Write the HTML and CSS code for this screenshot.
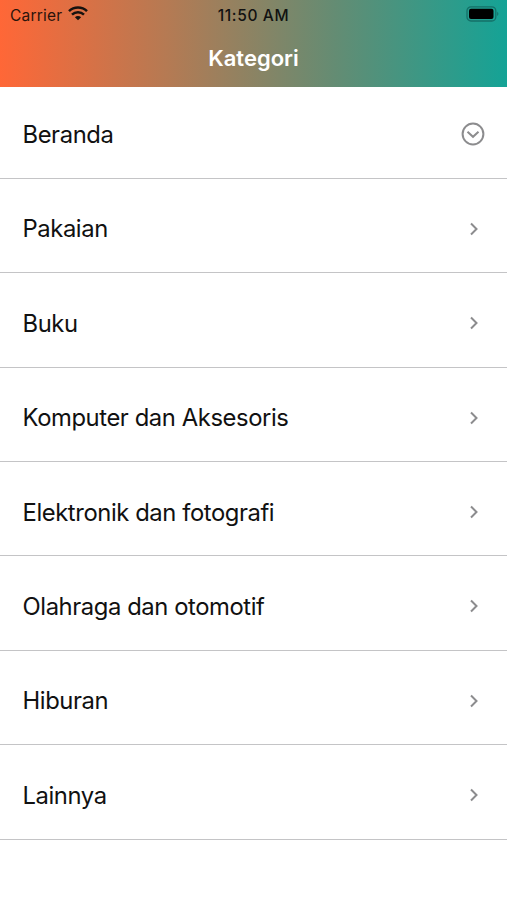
FILE: index.html
```html
<!DOCTYPE html>
<html lang="id">
<head>
<meta charset="utf-8">
<title>Kategori</title>
<link rel="stylesheet" href="styles.css">
</head>
<body>
<header class="header">
  <div class="status">
    <div class="carrier"><span class="carrier-name">Carrier</span>
      <svg class="wifi" width="20" height="15" viewBox="0 0 20 15"><path d="M10 14.300 6.900 11.300a4.400 4.400 0 0 1 6.200 0z"/><path d="M1 5.200a13 13 0 0 1 18 0M4 8.600a8.600 8.600 0 0 1 12 0" fill="none" stroke="#16120f" stroke-width="2.500"/></svg>
    </div>
    <div class="clock"><span class="clock-text">11:50 AM</span></div>
    <div class="battery"><svg width="34" height="16" viewBox="0 0 34 16"><rect x="1" y=".8" width="28.800" height="14.200" rx="4" fill="none" stroke="#147068" stroke-width="1.300"/><rect x="3" y="2.800" width="24.500" height="10.200" rx="2"/><path d="M31.200 5.700q2.400 2.200 0 4.400z" fill="#147068"/></svg></div>
  </div>
  <h1 class="title"><span class="title-text">Kategori</span></h1>
</header>
<main class="list">
  <div class="row first"><span class="label">Beranda</span><svg class="down" width="24" height="24" viewBox="0 0 24 24"><circle cx="12" cy="12" r="10.400"/><path d="m6.500 9.800 5.500 5 5.500-5"/></svg></div>
  <div class="row"><span class="label">Pakaian</span><svg class="chev" width="10" height="14" viewBox="0 0 10 14"><path d="m2 1.500 5.500 5.500L2 12.500"/></svg></div>
  <div class="row"><span class="label">Buku</span><svg class="chev" width="10" height="14" viewBox="0 0 10 14"><path d="m2 1.500 5.500 5.500L2 12.500"/></svg></div>
  <div class="row"><span class="label">Komputer dan Aksesoris</span><svg class="chev" width="10" height="14" viewBox="0 0 10 14"><path d="m2 1.500 5.500 5.500L2 12.500"/></svg></div>
  <div class="row"><span class="label">Elektronik dan fotografi</span><svg class="chev" width="10" height="14" viewBox="0 0 10 14"><path d="m2 1.500 5.500 5.500L2 12.500"/></svg></div>
  <div class="row"><span class="label">Olahraga dan otomotif</span><svg class="chev" width="10" height="14" viewBox="0 0 10 14"><path d="m2 1.500 5.500 5.500L2 12.500"/></svg></div>
  <div class="row"><span class="label">Hiburan</span><svg class="chev" width="10" height="14" viewBox="0 0 10 14"><path d="m2 1.500 5.500 5.500L2 12.500"/></svg></div>
  <div class="row"><span class="label">Lainnya</span><svg class="chev" width="10" height="14" viewBox="0 0 10 14"><path d="m2 1.500 5.500 5.500L2 12.500"/></svg></div>
</main>
</body>
</html>
```
FILE: styles.css
```css
* { box-sizing: border-box; }
body { margin: 0; height: 900px; overflow: hidden; background: #fff; color: #111; font-family: Inter, sans-serif; }
svg { display: block; flex: none; }
.header { height: 87.4px; background: linear-gradient(90deg, #ff6737, #b57a53 33%, #648c73 66%, #14a396); }
.status { height: 30px; display: grid; grid-template-columns: 1fr auto 1fr; align-items: center; padding: 0 7px 0 10px; font-size: 15.5px; }
.carrier { display: flex; align-items: center; gap: 6px; color: #2b130b; }
.carrier-name { letter-spacing: .2px; }
.wifi { margin-top: -3px; fill: #16120f; }
.clock { font-weight: 500; letter-spacing: .65px; margin-left: -3px; }
.battery { justify-self: end; margin-top: -2px; }
.title { margin: 0; height: 57px; line-height: 57px; text-align: center; color: #fff; font-size: 22px; font-weight: 600; }
.row { height: 94.4px; display: flex; align-items: center; justify-content: space-between; padding: 7px 28.5px 0 22.5px; border-bottom: 1px solid #c4c4c6; }
.row.first { height: 91.4px; padding: 4px 22px 0 22.5px; }
.label { font-size: 23.8px; letter-spacing: -.41px; white-space: nowrap; }
.chev, .down { fill: none; stroke: #8c8c8e; stroke-width: 2; }
.chev { margin-top: -.5px; }
.down { margin-top: -1px; }
```
